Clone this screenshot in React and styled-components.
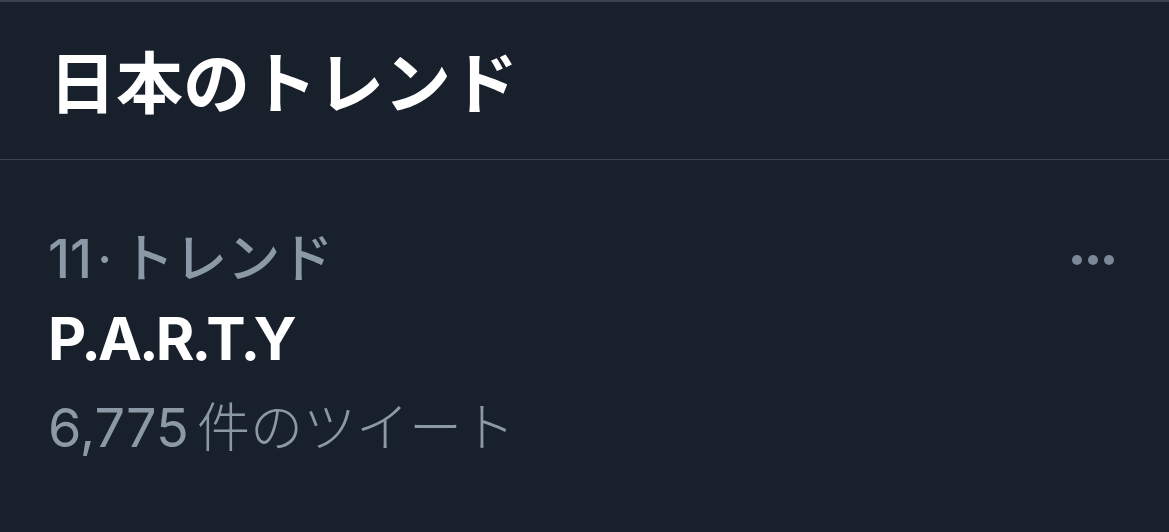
import React from 'react'
import styled, { createGlobalStyle } from 'styled-components'

const GlobalStyle = createGlobalStyle`
    html, body {
        margin: 0;
        padding: 0;
        background-color: #18202b;
    }
    body {
        font-family: "Inter", "Noto Sans CJK JP", sans-serif;
        -webkit-font-smoothing: antialiased;
    }
`

const trend = {
    rank: 11,
    label: 'トレンド',
    name: 'P.A.R.T.Y',
    count: '6,775',
}

const App = () => {
  return (
    <Container>
        <GlobalStyle />
        <Header>
            <h2>日本のトレンド</h2>
        </Header>
        <TrendItem>
            <div className="text">
                <Meta>{trend.rank}<span className="dot">·</span>{trend.label}</Meta>
                <Name>{trend.name}</Name>
                <Meta $count>{trend.count}<span className="unit">件のツイート</span></Meta>
            </div>
            <MoreButton aria-label="more">
                <span /><span /><span />
            </MoreButton>
        </TrendItem>
    </Container>
  )
}

const Container = styled.div`
    width: 1169px;
    height: 532px;
    overflow: hidden;
    box-sizing: border-box;
    border-top: 2px solid #3a434f;
    background-color: #18202b;
    color: #ffffff;
`
const Header = styled.div`
    height: 158px;
    box-sizing: border-box;
    border-bottom: 1px solid #3a434e;
    display: flex;
    align-items: center;
    padding-left: 49px;
    padding-bottom: 4px;
    h2{
        margin: 0;
        font-family: "Noto Sans CJK JP", sans-serif;
        font-size: 67px;
        font-weight: 700;
        color: #ffffff;
        line-height: 1;
    }
`
const TrendItem = styled.div`
    display: flex;
    justify-content: space-between;
    align-items: flex-start;
    padding: 63px 55px 0 48px;
    .text{
        display: flex;
        flex-direction: column;
    }
`
const Meta = styled.div`
    font-size: ${props => props.$count ? '54px' : '53px'};
    line-height: ${props => props.$count ? '82px' : '72px'};
    color: #8b98a5;
    font-weight: ${props => props.$count ? 400 : 500};
    white-space: nowrap;
    .dot{
        margin: 0 9px 0 5px;
        font-weight: 400;
    }
    .unit{
        margin-left: 8px;
        font-size: 53px;
        font-family: "Noto Sans CJK JP", sans-serif;
        font-weight: 300;
    }
`
const Name = styled.div`
    font-size: 59px;
    line-height: 88px;
    font-weight: 700;
    letter-spacing: -3px;
    color: #ffffff;
`
const MoreButton = styled.div`
    display: flex;
    gap: 6px;
    margin-top: 32px;
    span{
        width: 10px;
        height: 10px;
        border-radius: 50%;
        background-color: #7a8798;
    }
`
export default App
